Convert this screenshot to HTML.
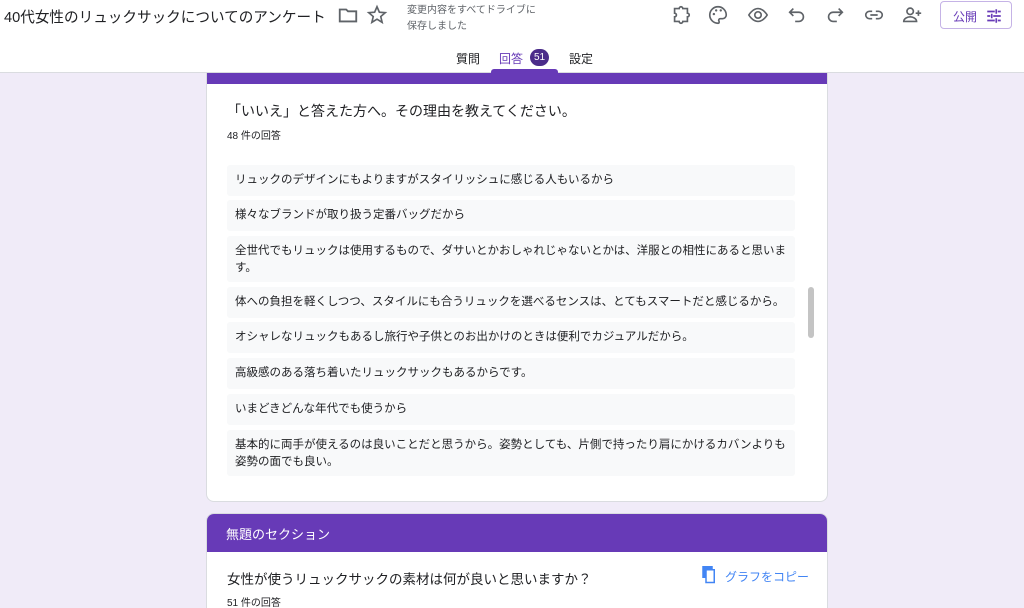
<!DOCTYPE html>
<html style="width:1024px;height:608px;overflow:hidden"><head><meta charset="utf-8"><style>
*{box-sizing:border-box;margin:0;padding:0}
body{width:1024px;height:608px;overflow:hidden;background:#f0ebf8;font-family:"Liberation Sans","Noto Sans CJK JP",sans-serif;color:#202124;position:relative}
.hdr{position:absolute;left:0;top:0;width:1024px;height:73px;background:#fff;border-bottom:1px solid #dadce0;z-index:5}
.title{position:absolute;left:4px;top:6px;font-size:14.6px;color:#202124}
.saved{position:absolute;left:407px;top:3px;font-size:10px;color:#5f6368;line-height:16px}
.ic{position:absolute;top:4px;width:22px;height:22px}
.pub{position:absolute;left:940px;top:0;width:72px;height:28px;border:1px solid #c5b3e6;border-radius:4px;color:#673ab7;font-size:12px;padding:6px 0 0 12px}
.tabs{position:absolute;top:50px;font-size:12px;color:#202124}
.badge{position:absolute;left:530px;top:49px;width:19px;height:17px;border-radius:9px;background:#4b2c8a;color:#fff;font-size:10px;text-align:center;line-height:17px}
.uline{position:absolute;left:491px;top:69px;width:67px;height:4px;background:#673ab7;border-radius:3px 3px 0 0}
.card{position:absolute;left:206px;width:622px;background:#fff;border:1px solid #dadce0;border-radius:8px}
.item{position:absolute;left:227px;width:568px;background:#f8f9fa;border-radius:3px;font-size:11.5px;line-height:17px;padding:7px 8px;color:#202124}
</style></head><body>
<div class="hdr">
<div class="title">40代女性のリュックサックについてのアンケート</div>
<svg class="ic" style="left:337px" viewBox="0 0 24 24"><path d="M3 6h7l2 2h9v11H3z" fill="none" stroke="#5f6368" stroke-width="2"/></svg>
<svg class="ic" style="left:366px" viewBox="0 0 24 24"><path d="M12 3l2.6 6 6.4.5-4.9 4.2 1.5 6.3L12 16.6 6.4 20l1.5-6.3L3 9.5 9.4 9z" fill="none" stroke="#5f6368" stroke-width="1.8"/></svg>
<div class="saved">変更内容をすべてドライブに<br>保存しました</div>
<svg class="ic" style="left:670px" viewBox="0 0 24 24"><path d="M5 5h5a2 2 0 014 0h5v5a2 2 0 010 4v5h-5a2 2 0 01-4 0H5v-5a2 2 0 000-4z" fill="none" stroke="#5f6368" stroke-width="1.8"/></svg>
<svg class="ic" style="left:707px" viewBox="0 0 24 24"><path d="M12 3a9 9 0 000 18c1.5 0 1.5-1.5 1-2.5-.6-1 0-2.5 1.5-2.5H17a4 4 0 004-4c0-5-4-9-9-9z" fill="none" stroke="#5f6368" stroke-width="1.8"/><circle cx="7.5" cy="11" r="1.3" fill="#5f6368"/><circle cx="10" cy="7" r="1.3" fill="#5f6368"/><circle cx="15" cy="7" r="1.3" fill="#5f6368"/></svg>
<svg class="ic" style="left:747px" viewBox="0 0 24 24"><path d="M2 12s4-7 10-7 10 7 10 7-4 7-10 7S2 12 2 12z" fill="none" stroke="#5f6368" stroke-width="1.8"/><circle cx="12" cy="12" r="3.5" fill="none" stroke="#5f6368" stroke-width="1.8"/></svg>
<svg class="ic" style="left:786px" viewBox="0 0 24 24"><path d="M8 5L4 9l4 4M4 9h10a5 5 0 010 10h-4" fill="none" stroke="#5f6368" stroke-width="1.8"/></svg>
<svg class="ic" style="left:824px" viewBox="0 0 24 24"><path d="M16 5l4 4-4 4M20 9H10a5 5 0 000 10h4" fill="none" stroke="#5f6368" stroke-width="1.8"/></svg>
<svg class="ic" style="left:863px" viewBox="0 0 24 24"><path d="M10 8H7a4 4 0 000 8h3M14 8h3a4 4 0 010 8h-3M8 12h8" fill="none" stroke="#5f6368" stroke-width="1.8"/></svg>
<svg class="ic" style="left:901px" viewBox="0 0 24 24"><circle cx="10" cy="8" r="3.5" fill="none" stroke="#5f6368" stroke-width="1.8"/><path d="M3 19c0-3 4-5 7-5s7 2 7 5zM19 7v6M16 10h6" fill="none" stroke="#5f6368" stroke-width="1.8"/></svg>
<div class="pub" style="top:1px">公開<svg style="position:absolute;left:44px;top:5px" width="18" height="18" viewBox="0 0 24 24"><path d="M3 6h10M17 6h4M15 3v6M3 12h4M11 12h10M9 9v6M3 18h10M17 18h4M15 15v6" fill="none" stroke="#673ab7" stroke-width="2.2"/></svg></div>
<div class="tabs" style="left:456px">質問</div>
<div class="tabs" style="left:499px;color:#673ab7">回答</div>
<div class="badge">51</div>
<div class="tabs" style="left:569px">設定</div>
<div class="uline"></div>
</div>
<div class="card" style="top:73px;height:429px;border-top:none;border-radius:0 0 8px 8px;overflow:hidden"><div style="height:11px;background:#673ab7"></div></div>
<div style="position:absolute;left:227px;top:101px;font-size:14px">「いいえ」と答えた方へ。その理由を教えてください。</div>
<div style="position:absolute;left:227px;top:127px;font-size:10px">48 件の回答</div>
<div class="item" style="top:165px;height:31px">リュックのデザインにもよりますがスタイリッシュに感じる人もいるから</div>
<div class="item" style="top:200px;height:31px">様々なブランドが取り扱う定番バッグだから</div>
<div class="item" style="top:236px;height:46px">全世代でもリュックは使用するもので、ダサいとかおしゃれじゃないとかは、洋服との相性にあると思います。</div>
<div class="item" style="top:287px;height:31px">体への負担を軽くしつつ、スタイルにも合うリュックを選べるセンスは、とてもスマートだと感じるから。</div>
<div class="item" style="top:322px;height:31px">オシャレなリュックもあるし旅行や子供とのお出かけのときは便利でカジュアルだから。</div>
<div class="item" style="top:358px;height:31px">高級感のある落ち着いたリュックサックもあるからです。</div>
<div class="item" style="top:394px;height:31px">いまどきどんな年代でも使うから</div>
<div class="item" style="top:430px;height:46px">基本的に両手が使えるのは良いことだと思うから。姿勢としても、片側で持ったり肩にかけるカバンよりも姿勢の面でも良い。</div>
<div style="position:absolute;left:808px;top:287px;width:6px;height:51px;background:#c4c4c4;border-radius:3px"></div>
<div class="card" style="top:513px;height:95px;overflow:hidden;border-bottom:none;border-radius:8px 8px 0 0"><div style="height:38px;background:#673ab7;color:#fff;font-size:13px;padding:10px 0 0 19px">無題のセクション</div></div>
<div style="position:absolute;left:227px;top:568px;font-size:13.5px">女性が使うリュックサックの素材は何が良いと思いますか？</div>
<svg style="position:absolute;left:700px;top:566px" width="18" height="18" viewBox="0 0 24 24"><path d="M16 1H4v14h2V3h10zM8 5h11v17H8z" fill="none" stroke="#4285f4" stroke-width="2"/></svg>
<div style="position:absolute;left:725px;top:568px;font-size:12px;color:#4285f4">グラフをコピー</div>
<div style="position:absolute;left:227px;top:594px;font-size:10px">51 件の回答</div>
</body></html>
